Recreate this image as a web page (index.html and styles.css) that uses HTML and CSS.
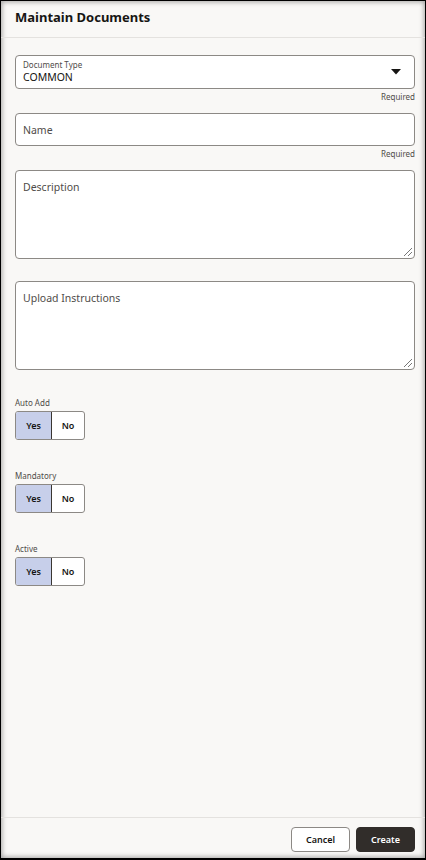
FILE: index.html
```html
<!DOCTYPE html>
<html lang="en">
<head>
<meta charset="utf-8">
<title>Maintain Documents</title>
<link rel="stylesheet" href="styles.css">
</head>
<body>
<div class="frame">
  <div class="panel">
    <header class="header">
      <h1 class="title">Maintain Documents</h1>
    </header>
    <main class="form">
      <div class="field-group">
        <div class="field select">
          <div class="select-text">
            <span class="float-label">Document Type</span>
            <span class="value">COMMON</span>
          </div>
          <svg class="caret" width="10" height="6" viewBox="0 0 10 6"><path d="M0 0H10L5 5.5Z" fill="#161513"/></svg>
        </div>
        <div class="help">Required</div>
      </div>
      <div class="field-group">
        <div class="field input"><span class="placeholder">Name</span></div>
        <div class="help">Required</div>
      </div>
      <div class="field-group area-group">
        <div class="field area"><span class="placeholder">Description</span><span class="grip"></span></div>
      </div>
      <div class="field-group last-area">
        <div class="field area"><span class="placeholder">Upload Instructions</span><span class="grip"></span></div>
      </div>
      <div class="toggle-group">
        <div class="toggle-label">Auto Add</div>
        <div class="toggle"><span class="seg on">Yes</span><span class="seg">No</span></div>
      </div>
      <div class="toggle-group">
        <div class="toggle-label">Mandatory</div>
        <div class="toggle"><span class="seg on">Yes</span><span class="seg">No</span></div>
      </div>
      <div class="toggle-group">
        <div class="toggle-label">Active</div>
        <div class="toggle"><span class="seg on">Yes</span><span class="seg">No</span></div>
      </div>
    </main>
    <footer class="footer">
      <button class="btn cancel">Cancel</button>
      <button class="btn create">Create</button>
    </footer>
  </div>
</div>
</body>
</html>
```

FILE: styles.css
```css
* { box-sizing: border-box; }
html, body { margin: 0; padding: 0; }
body {
  width: 426px;
  height: 860px;
  background: #000;
  font-family: "Noto Sans", "Open Sans", sans-serif;
  color: #161513;
}
.frame {
  width: 426px;
  height: 860px;
  border: 1px solid #000;
  border-bottom-width: 2px;
}
.panel {
  height: 100%;
  background: #f9f8f6;
  box-shadow: inset 0 0 5px 1px rgba(0,0,0,0.35);
  display: flex;
  flex-direction: column;
}
.header {
  height: 37px;
  border-bottom: 1px solid #e4e2df;
  padding: 0 14px;
  display: flex;
  align-items: center;
}
.title {
  margin: 0;
  font-size: 13px;
  font-weight: 700;
  color: #161513;
  position: relative;
  top: -2px;
}
.form {
  flex: 1;
  padding: 17px 10px 0 14px;
}
.field {
  background: #fff;
  border: 1px solid #8c8985;
  border-radius: 4px;
  position: relative;
}
.select {
  height: 34px;
  display: flex;
  align-items: center;
  justify-content: space-between;
  padding: 0 13px 0 7px;
}
.select-text { display: flex; flex-direction: column; line-height: 1; }
.float-label { font-size: 8px; color: #4f4c49; margin-bottom: 3px; }
.value { font-size: 10.5px; color: #161513; }
.caret { margin-top: 0; }
.input {
  height: 33px;
  display: flex;
  align-items: center;
  padding: 0 7px;
}
.placeholder { font-size: 10.5px; color: #4f4c49; }
.area {
  height: 89px;
  padding: 9px 7px;
  font-size: 10.5px;
  line-height: 15px;
}
.grip {
  position: absolute;
  right: 2px;
  bottom: 2px;
  width: 8px;
  height: 8px;
  background: linear-gradient(135deg, transparent 45%, #777 45%, #777 52%, transparent 52%, transparent 72%, #777 72%, #777 79%, transparent 79%);
}
.help {
  text-align: right;
  font-size: 8px;
  color: #4f4c49;
  line-height: 10px;
  margin-top: 3px;
  height: 10px;
}
.field-group { margin-bottom: 11px; }
.area-group { margin-bottom: 22px; }
.last-area { margin-bottom: 28px; }
.toggle-group { margin-bottom: 31px; }
.toggle-label {
  font-size: 8px;
  color: #4f4c49;
  line-height: 10px;
  margin-bottom: 3px;
}
.toggle {
  display: flex;
  width: fit-content;
  height: 29px;
  border: 1px solid #8c8985;
  border-radius: 3px;
  overflow: hidden;
  background: #fff;
}
.seg {
  width: 32px;
  display: flex;
  align-items: center;
  justify-content: center;
  font-size: 9px;
  font-weight: 600;
  color: #161513;
}
.seg.on {
  width: 36px;
  background: #c7cfea;
  border-right: 1px solid #3a3632;
}
.footer {
  height: 41px;
  border-top: 1px solid #e4e2df;
  display: flex;
  justify-content: flex-end;
  align-items: flex-start;
  gap: 6px;
  padding: 9px 10px 0 0;
}
.btn {
  height: 25px;
  border-radius: 4px;
  font-family: inherit;
  font-size: 9px;
  font-weight: 600;
  padding: 0;
  cursor: pointer;
}
.cancel {
  width: 59px;
  background: #fff;
  border: 1px solid #8c8985;
  color: #161513;
}
.create {
  width: 59px;
  background: #312d2a;
  border: 1px solid #312d2a;
  color: #fff;
}
```
